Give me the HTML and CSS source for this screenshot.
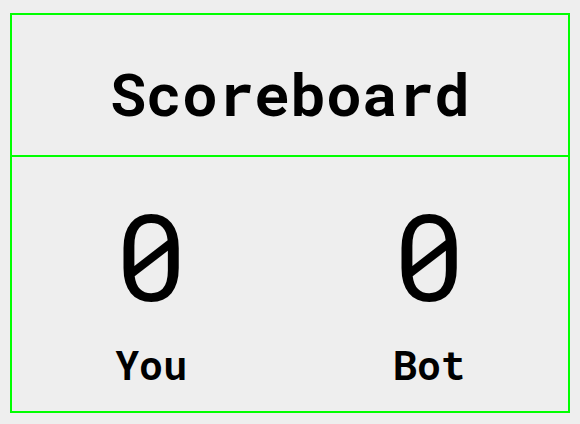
FILE: index.html
```html
<!DOCTYPE html>
<html>
<head>
<meta charset="utf-8">
<link rel="stylesheet" href="styles.css">
</head>
<body>
<div class="board">
  <div class="header"><h1 class="title">Scoreboard</h1></div>
  <div class="scores">
    <div class="player">
      <div class="score">0</div>
      <div class="name">You</div>
    </div>
    <div class="player">
      <div class="score">0</div>
      <div class="name">Bot</div>
    </div>
  </div>
</div>
</body>
</html>
```
FILE: styles.css
```css
html, body {
  margin: 0;
  padding: 0;
  background: #eeeeee;
}
body {
  padding: 13px 10px 0 10px;
  font-family: "Roboto Mono", "DejaVu Sans Mono", monospace;
  color: #000;
}
.board {
  box-sizing: border-box;
  width: 560px;
  height: 400px;
  border: 2px solid #00ff00;
  display: flex;
  flex-direction: column;
}
.header {
  box-sizing: border-box;
  height: 142px;
  padding-top: 14px;
  border-bottom: 2px solid #00ff00;
  display: flex;
  align-items: center;
  justify-content: center;
}
.title {
  margin: 0;
  font-size: 60px;
  font-weight: 700;
}
.scores {
  flex: 1;
  display: grid;
  grid-template-columns: 1fr 1fr;
}
.player {
  display: flex;
  flex-direction: column;
  align-items: center;
  padding-top: 28px;
}
.score {
  font-size: 120px;
  line-height: 140px;
}
.name {
  margin-top: 16px;
  font-size: 40px;
  font-weight: 700;
  line-height: 48px;
}
```
